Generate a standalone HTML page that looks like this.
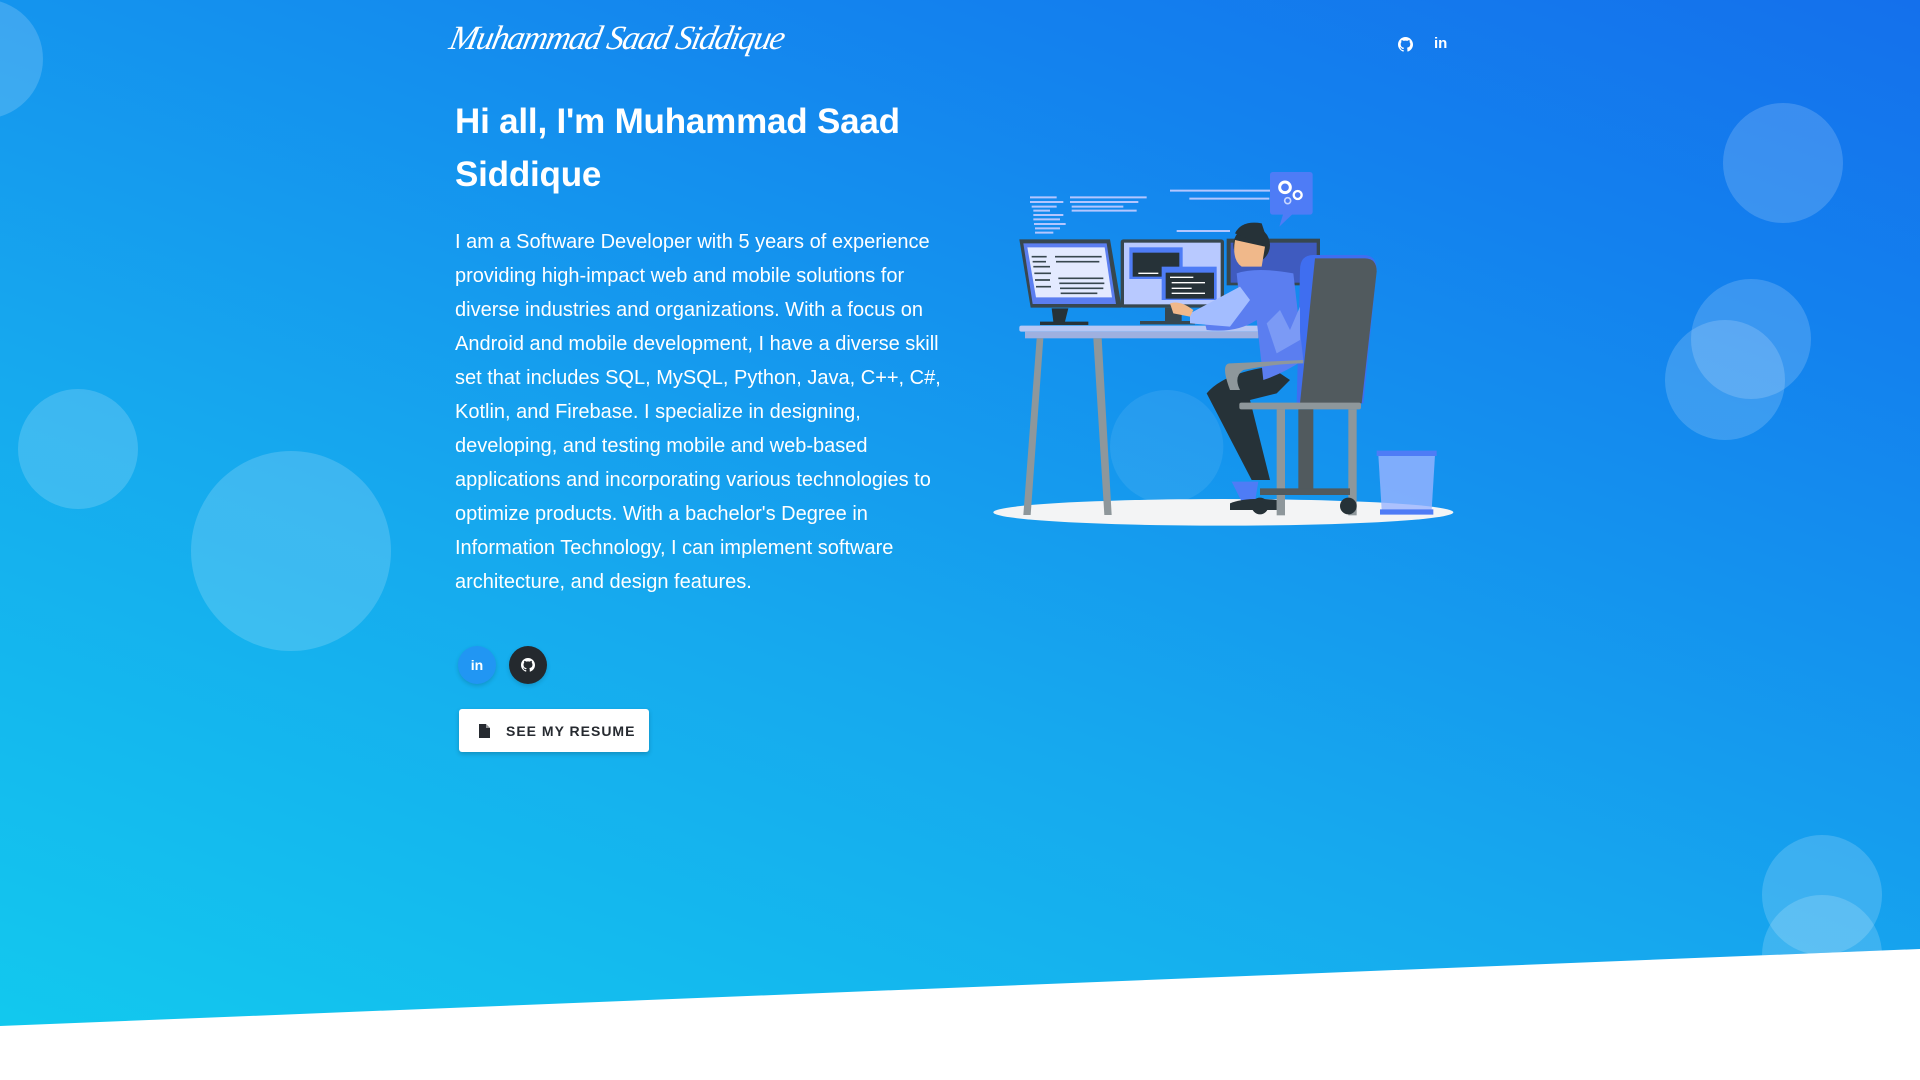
<!DOCTYPE html>
<html><head><meta charset="utf-8">
<style>
html,body{margin:0;padding:0}
body{width:1920px;height:1080px;overflow:hidden;position:relative;font-family:"Liberation Sans",sans-serif;background:#fff}
.bg{position:absolute;left:0;top:0;width:1920px;height:1080px;background:linear-gradient(20deg,#12cbee 0%,#16a9ee 40%,#1381ee 80%,#1470ec 100%);clip-path:polygon(0 0,1920px 0,1920px 949px,0 1026px)}
.b{position:absolute;border-radius:50%;background:rgba(255,255,255,0.17)}
.logo{position:absolute;left:450px;top:20px;font-family:"Liberation Serif",serif;font-style:italic;font-size:34px;color:#fff;letter-spacing:-1.5px;transform:skewX(-12deg);font-weight:normal}
h1{position:absolute;left:455px;top:95px;margin:0;font-size:35px;line-height:53px;color:#fff;font-weight:bold;width:520px;letter-spacing:-0.2px}
.p{position:absolute;left:455px;top:225px;font-size:20px;line-height:34px;color:#fff;white-space:nowrap}
.c{position:absolute;width:38px;height:38px;border-radius:50%;display:flex;align-items:center;justify-content:center;color:#fff;font-weight:bold;font-size:14px;box-shadow:0 2px 4px rgba(0,0,0,.15)}
.btn{position:absolute;left:459px;top:709px;width:190px;height:43px;background:#fff;border-radius:3px;box-shadow:0 2px 5px rgba(0,0,0,.2);font-size:14px;font-weight:bold;letter-spacing:1px;color:#262a30;display:flex;align-items:center}
.hi{position:absolute;top:37px;color:#fff;font-weight:bold;font-size:15px}
</style></head><body>
<div class="bg">
<div class="b" style="left:-77px;top:-1px;width:120px;height:120px"></div>
<div class="b" style="left:1723px;top:103px;width:120px;height:120px"></div>
<div class="b" style="left:1691px;top:279px;width:120px;height:120px"></div>
<div class="b" style="left:1665px;top:320px;width:120px;height:120px"></div>
<div class="b" style="left:18px;top:389px;width:120px;height:120px"></div>
<div class="b" style="left:191px;top:451px;width:200px;height:200px"></div>
<div class="b" style="left:1762px;top:835px;width:120px;height:120px"></div>
<div class="b" style="left:1762px;top:895px;width:120px;height:120px"></div>
</div>
<div class="logo">Muhammad Saad Siddique</div>
<svg class="hi" style="left:1398px;top:37px" width="15" height="15" viewBox="0 0 16 16"><path fill="#fff" d="M8 0C3.6 0 0 3.6 0 8c0 3.5 2.3 6.5 5.5 7.6.4.1.5-.2.5-.4v-1.4c-2.2.5-2.7-1-2.7-1-.4-.9-.9-1.2-.9-1.2-.7-.5.1-.5.1-.5.8.1 1.2.8 1.2.8.7 1.2 1.9.9 2.3.7.1-.5.3-.9.5-1.1-1.8-.2-3.6-.9-3.6-4 0-.9.3-1.6.8-2.1-.1-.2-.4-1 .1-2.1 0 0 .7-.2 2.2.8.6-.2 1.3-.3 2-.3s1.4.1 2 .3c1.5-1 2.2-.8 2.2-.8.4 1.1.2 1.9.1 2.1.5.6.8 1.3.8 2.1 0 3.1-1.9 3.7-3.6 3.9.3.3.5.8.5 1.5v2.2c0 .2.1.5.6.4C13.7 14.5 16 11.5 16 8c0-4.4-3.6-8-8-8z"/></svg>
<div class="hi" style="left:1434px;top:35px">in</div>
<h1>Hi all, I'm Muhammad Saad Siddique</h1>
<div class="p">I am a Software Developer with 5 years of experience<br>providing high-impact web and mobile solutions for<br>diverse industries and organizations. With a focus on<br>Android and mobile development, I have a diverse skill<br>set that includes SQL, MySQL, Python, Java, C++, C#,<br>Kotlin, and Firebase. I specialize in designing,<br>developing, and testing mobile and web-based<br>applications and incorporating various technologies to<br>optimize products. With a bachelor's Degree in<br>Information Technology, I can implement software<br>architecture, and design features.</div>
<div class="c" style="left:458px;top:646px;background:#2196f3">in</div>
<div class="c" style="left:509px;top:646px;background:#24292e"><svg width="14" height="14" viewBox="0 0 16 16"><path fill="#fff" d="M8 0C3.6 0 0 3.6 0 8c0 3.5 2.3 6.5 5.5 7.6.4.1.5-.2.5-.4v-1.4c-2.2.5-2.7-1-2.7-1-.4-.9-.9-1.2-.9-1.2-.7-.5.1-.5.1-.5.8.1 1.2.8 1.2.8.7 1.2 1.9.9 2.3.7.1-.5.3-.9.5-1.1-1.8-.2-3.6-.9-3.6-4 0-.9.3-1.6.8-2.1-.1-.2-.4-1 .1-2.1 0 0 .7-.2 2.2.8.6-.2 1.3-.3 2-.3s1.4.1 2 .3c1.5-1 2.2-.8 2.2-.8.4 1.1.2 1.9.1 2.1.5.6.8 1.3.8 2.1 0 3.1-1.9 3.7-3.6 3.9.3.3.5.8.5 1.5v2.2c0 .2.1.5.6.4C13.7 14.5 16 11.5 16 8c0-4.4-3.6-8-8-8z"/></svg></div>
<div class="btn"><svg style="margin-left:20px;margin-right:16px" width="11" height="14" viewBox="0 0 11 14"><path fill="#262a30" d="M0 0h7l4 4v10H0z"/><path fill="#fff" d="M7 0v4h4z" opacity=".5"/></svg>SEE MY RESUME</div>

<svg style="position:absolute;left:990px;top:160px" width="470" height="370" viewBox="0 0 1410 1110">
<circle cx="530" cy="860" r="170" fill="rgba(255,255,255,0.08)"/>
<ellipse cx="700" cy="1057" rx="690" ry="40" fill="#f3f4f5"/>
<g stroke="#b4c6ff" stroke-width="6">
<path d="M120 112h80M120 126h100M125 140h75M130 152h50M130 165h90M130 178h80M132 192h95M135 205h75M135 218h55M240 112h230M240 126h205M245 140h155M245 152h195M540 92h300M598 116h240M560 213h160"/>
</g>
<rect x="840" y="36" width="128" height="128" rx="8" fill="#4e7cf6"/>
<path d="M880 160l-12 40 40-38z" fill="#4e7cf6"/>
<circle cx="885" cy="82" r="16" fill="none" stroke="#fff" stroke-width="9"/>
<circle cx="923" cy="105" r="12" fill="none" stroke="#fff" stroke-width="7"/>
<circle cx="893" cy="122" r="9" fill="none" stroke="#c8d6ff" stroke-width="5"/>
<rect x="710" y="236" width="280" height="140" fill="#37474f"/>
<rect x="722" y="248" width="258" height="120" fill="#3f5bbf"/>
<path d="M88 238h272l35 205H122z" fill="#37474f"/>
<path d="M100 250h250l28 182H128z" fill="#5b7ef0"/>
<path d="M112 262h232l22 150H138z" fill="#e3eaff"/>
<g stroke="#37474f" stroke-width="5"><path d="M125 290h45M128 305h40M130 320h50M133 340h50M135 360h45M138 380h45M195 290h140M198 305h130M205 355h135M208 370h135M210 385h130M212 400h110"/></g>
<path d="M185 445h50l-10 40h70v10H150v-10h40z" fill="#263238"/>
<rect x="392" y="238" width="310" height="205" rx="8" fill="#37474f"/>
<rect x="402" y="248" width="290" height="185" fill="#b8c9ff"/>
<rect x="418" y="262" width="160" height="95" fill="#4e7cf6"/><rect x="428" y="278" width="140" height="72" fill="#263238"/>
<rect x="515" y="320" width="165" height="100" fill="#4e7cf6"/><rect x="527" y="338" width="145" height="78" fill="#263238"/>
<g stroke="#fff" stroke-width="4"><path d="M540 352h70M545 368h100M545 385h60M545 400h100M445 340h60"/></g>
<path d="M525 443h50v40h40v10H450v-10h75z" fill="#37474f"/>
<rect x="88" y="497" width="720" height="18" rx="6" fill="#b7c7f4"/>
<rect x="105" y="515" width="700" height="20" fill="#9eb0e0"/>
<path d="M140 535h20l-38 530h-22zM310 535h25l30 530h-22z" fill="#8e979b"/>
<path d="M930 330q0-45 40-45h150q40 0 40 45l-40 400H920z" fill="#3f6ef0"/>
<path d="M975 295h150q35 0 35 40l-45 395H930z" fill="#515a5e"/>
<path d="M650 700q50-60 190-80l60 40-40 40-80 20 60 240h-55z" fill="#263238"/>
<path d="M740 340q60-20 170 0l30 260q-60 40-120 60l-20-180q-60 40-150 30l-10-40 110-30z" fill="#5b7ef0"/>
<path d="M600 460l150-80 30 40-60 80-120-10z" fill="#a3bdff"/>
<path d="M830 490l40-40 30 60 30-70v100l-70 40z" fill="#7b9af5"/>
<circle cx="785" cy="255" r="55" fill="#263238"/>
<path d="M735 240q-10 60 20 80h60l10-60z" fill="#f0b88a"/>
<path d="M735 220q20-40 80-30l20 60-50-10z" fill="#263238"/>
<path d="M540 430q30-10 70 20l-10 20-50-10z" fill="#f0b88a"/>
<path d="M720 610q-30 0-0 80l30 0q-20-40 10-60 100-20 180-20v-10z" fill="#8e979b"/>
<rect x="748" y="728" width="365" height="20" rx="6" fill="#8e979b"/>
<rect x="860" y="748" width="25" height="318" fill="#8e979b"/><rect x="1075" y="748" width="25" height="318" fill="#8e979b"/>
<rect x="925" y="748" width="45" height="240" fill="#515a5e"/>
<path d="M810 985h270v20H810z" fill="#515a5e"/>
<circle cx="1075" cy="1038" r="25" fill="#263238"/><circle cx="810" cy="1038" r="25" fill="#263238"/>
<path d="M725 965h80l-10 60h-40z" fill="#4e7cf6"/>
<path d="M720 1030q50-20 140-10v30H720z" fill="#263238"/>
<path d="M1165 885h170l-10 165h-150z" fill="#9ab4ff" opacity=".8"/>
<path d="M1160 872h180v16H1160zM1170 1048h160v16H1170z" fill="#4e7cf6"/>
</svg>
</body></html>
